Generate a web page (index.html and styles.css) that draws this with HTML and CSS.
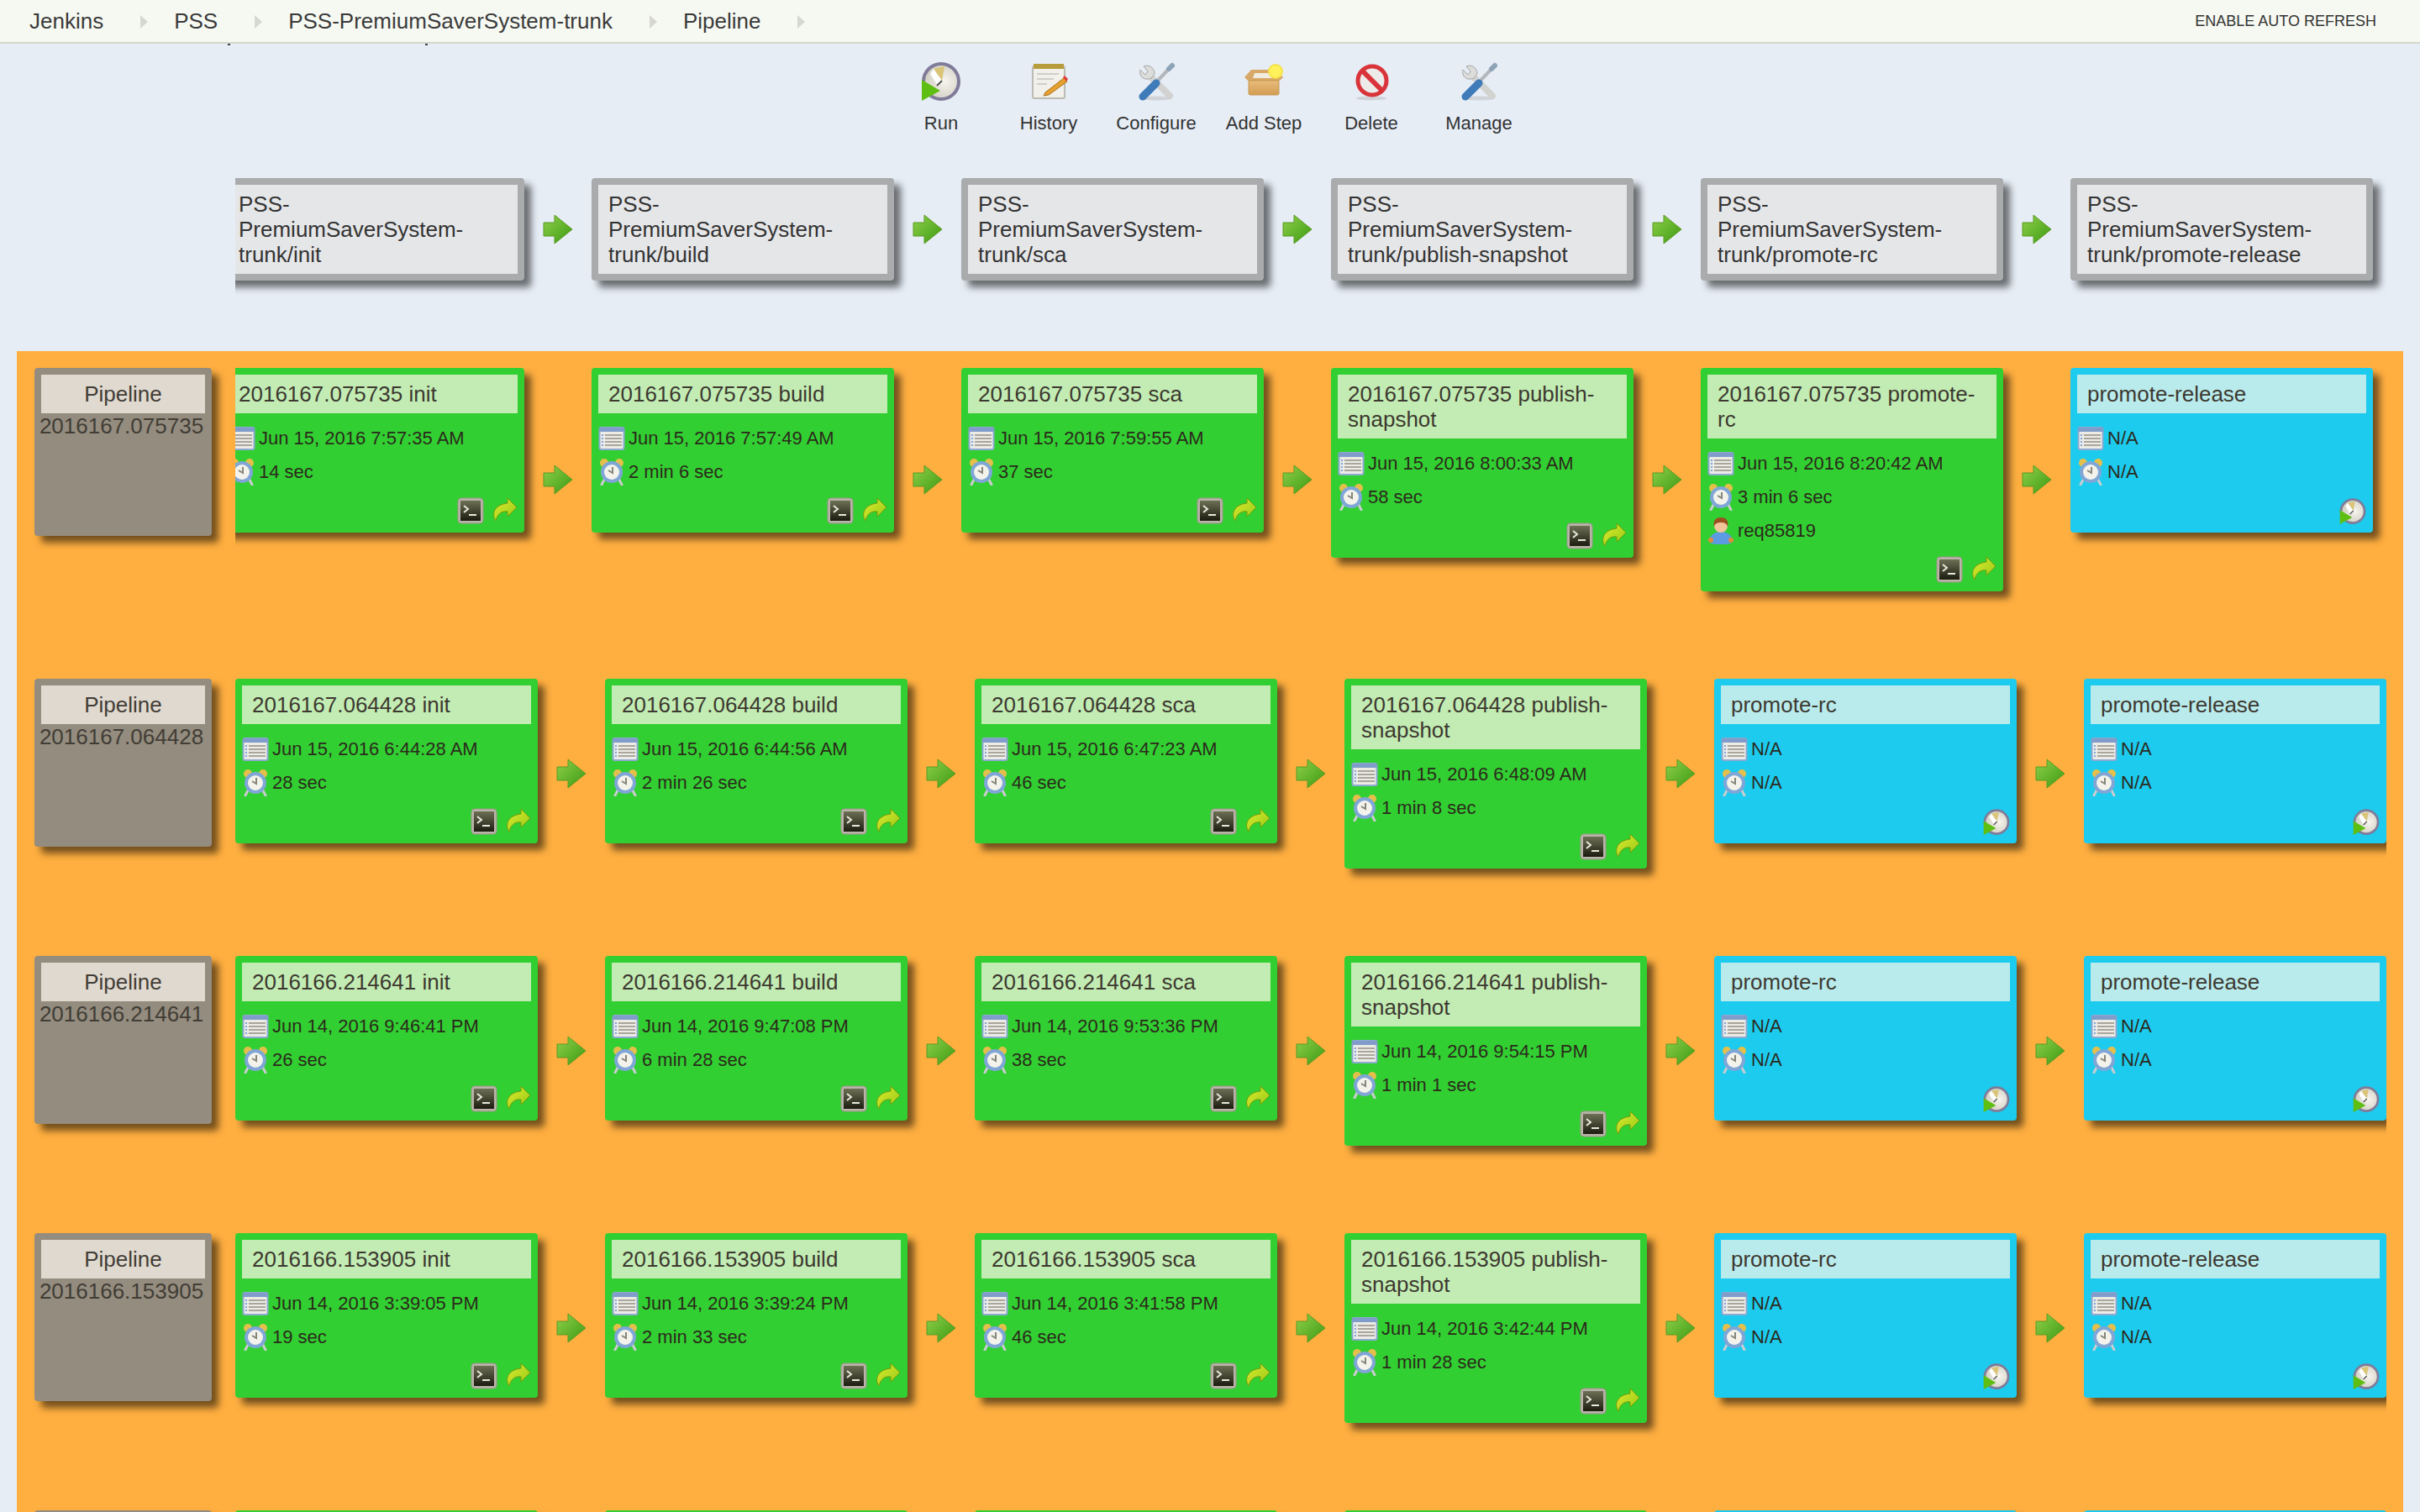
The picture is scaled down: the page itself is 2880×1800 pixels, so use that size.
FILE: index.html
```html
<!DOCTYPE html>
<html lang="en">
<head>
    <meta charset="UTF-8">
    <title>PSS-PremiumSaverSystem-trunk Pipeline</title>
    <link rel="stylesheet" href="styles.css">
</head>
<body>

<svg class="sprite" xmlns="http://www.w3.org/2000/svg">
    <defs>
        <linearGradient id="g-arrow" x1="0" y1="0" x2="1" y2="1"><stop offset="0" stop-color="#8fd04a"/><stop offset="1" stop-color="#3c9a12"/></linearGradient>
        <linearGradient id="g-next" x1="0" y1="0" x2="1" y2="1"><stop offset="0" stop-color="#dcec30"/><stop offset="1" stop-color="#98c814"/></linearGradient>
        <linearGradient id="g-term" x1="0" y1="0" x2="0" y2="1"><stop offset="0" stop-color="#6d7055"/><stop offset="1" stop-color="#1c1c10"/></linearGradient>
        <linearGradient id="g-box" x1="0" y1="0" x2="0" y2="1"><stop offset="0" stop-color="#e8bd7c"/><stop offset="1" stop-color="#d39c52"/></linearGradient>
        <radialGradient id="g-face" cx=".6" cy=".5" r=".6"><stop offset="0" stop-color="#f6f5ee"/><stop offset="1" stop-color="#cfccc0"/></radialGradient>

        <symbol id="i-arrow" viewBox="0 0 36 36">
            <path d="M1 10H14V1L35 18 14 35V26H1Z" fill="url(#g-arrow)" stroke="#5a9a22" stroke-width="1"/>
        </symbol>
        <symbol id="i-cal" viewBox="0 0 32 32">
            <rect x="1.5" y="3" width="29" height="26" rx="2" fill="#ecebe6" stroke="#8ea9d2" stroke-width="2"/>
            <rect x="1" y="3" width="30" height="5" fill="#7f9ccb"/>
            <path d="M8 12H28M8 16H28M8 20H28M8 24H28" stroke="#a9a69b" stroke-width="2"/>
            <path d="M4 12H6M4 16H6M4 20H6M4 24H6" stroke="#7fa6dd" stroke-width="2"/>
        </symbol>
        <symbol id="i-clock" viewBox="0 0 32 32">
            <circle cx="7" cy="5" r="5" fill="#e4c04a"/>
            <circle cx="25" cy="5" r="5" fill="#e4c04a"/>
            <path d="M7 25L4 31M25 25L28 31" stroke="#c9ccd0" stroke-width="3" stroke-linecap="round"/>
            <circle cx="16" cy="16" r="13" fill="#7fa6d6"/>
            <circle cx="16" cy="16" r="9" fill="#f3f3ec"/>
            <path d="M17 10V17L12 14" fill="none" stroke="#85857a" stroke-width="2"/>
        </symbol>
        <symbol id="i-user" viewBox="0 0 32 32">
            <path d="M3 30C1 24 6 17 16 17S31 24 29 30C24 33 8 33 3 30Z" fill="#5c9be2"/>
            <circle cx="4" cy="27" r="3" fill="#e08a3c"/>
            <circle cx="28" cy="27" r="3" fill="#e08a3c"/>
            <circle cx="16" cy="10" r="8" fill="#f2c49a"/>
            <path d="M8 11C6 3 11 0 16 0S26 3 24 11C23 7 20 6 16 6S9 7 8 11Z" fill="#9a4f1e"/>
        </symbol>
        <symbol id="i-term" viewBox="0 0 32 32">
            <rect x="1" y="1" width="30" height="30" rx="4" fill="#b8b5a8" stroke="#9a9789"/>
            <rect x="4" y="4" width="24" height="24" fill="url(#g-term)"/>
            <path d="M8 10L13 14 8 18" fill="none" stroke="#e8e8dc" stroke-width="2"/>
            <path d="M14 21H23" stroke="#e8e8dc" stroke-width="2"/>
        </symbol>
        <symbol id="i-next" viewBox="0 0 32 32">
            <path d="M20 1L31 12 20 23V17C13 16 8 20 6 28 1 21 3 9 20 7Z" fill="url(#g-next)" stroke="#6f9c0c"/>
        </symbol>
        <symbol id="i-run" viewBox="0 0 48 48">
            <circle cx="24" cy="25" r="21" fill="url(#g-face)" stroke="#7f7b99" stroke-width="4"/>
            <path d="M25 24L15 10 28 7Z" fill="#d9c477"/>
            <path d="M25 24L15 10 11 16 19 28Z" fill="#fff"/>
            <path d="M25 24L19 30" stroke="#555" stroke-width="2"/>
            <path d="M1 23L23 36 1 48Z" fill="#5fbe12"/>
        </symbol>
        <symbol id="i-history" viewBox="0 0 48 48">
            <rect x="5" y="7" width="38" height="38" rx="2" fill="#f1f0ea" stroke="#bcbbb4" stroke-width="2"/>
            <rect x="6" y="4" width="36" height="6" fill="#b79c3c"/>
            <path d="M10 16H36M10 22H30M10 28H22" stroke="#cfcec7" stroke-width="2"/>
            <path d="M20 38L42 21 46 25 24 41 18 42Z" fill="#e6a02f" stroke="#a8701c"/>
            <path d="M41 20L43 18 47 22 45 25Z" fill="#e23a3a"/>
        </symbol>
        <symbol id="i-tools" viewBox="0 0 48 48">
            <ellipse cx="24" cy="45" rx="19" ry="2.5" fill="#d0d4d9"/>
            <path d="M18 20L40 42" stroke="#d2d3d1" stroke-width="8" stroke-linecap="round"/>
            <path d="M9 7L14 13 11 17 5 11C3 18 9 25 18 21L22 16C22 10 17 4 9 7Z" fill="#dcdddb" stroke="#a4a6a8"/>
            <path d="M22 28L40 9" stroke="#b4b8bc" stroke-width="4"/>
            <path d="M39 10L43 6" stroke="#8da3b6" stroke-width="6" stroke-linecap="round"/>
            <path d="M8 43L24 27" stroke="#3f7ab9" stroke-width="9" stroke-linecap="round"/>
        </symbol>
        <symbol id="i-add" viewBox="0 0 48 48">
            <path d="M1 20L9 11H38L47 20 41 26H7Z" fill="#d8a866"/>
            <path d="M13 15H33L36 21H11Z" fill="#f1ece0"/>
            <rect x="6" y="24" width="36" height="17" rx="2" fill="url(#g-box)" stroke="#c79650"/>
            <circle cx="38" cy="13" r="8" fill="#fff25a" stroke="#f7e04a" stroke-width="2"/>
        </symbol>
        <symbol id="i-delete" viewBox="0 0 48 48">
            <ellipse cx="24" cy="45" rx="18" ry="2.5" fill="#d0d4d9"/>
            <circle cx="25" cy="24" r="17" fill="#ecebe9" stroke="#d9343a" stroke-width="5"/>
            <path d="M13 12L37 36" stroke="#d9343a" stroke-width="6"/>
        </symbol>
    </defs>
</svg>

<nav class="breadcrumbs">
    <a class="crumb">Jenkins</a><span class="crumb-sep"></span>
    <a class="crumb">PSS</a><span class="crumb-sep"></span>
    <a class="crumb">PSS-PremiumSaverSystem-trunk</a><span class="crumb-sep"></span>
    <a class="crumb">Pipeline</a><span class="crumb-sep"></span>
    <a class="auto-refresh">ENABLE AUTO REFRESH</a>
</nav>
<div class="scrolled-off"><i></i><i></i></div>

<div class="toolbar">
    <a class="tool"><svg class="tool-icon"><use href="#i-run"/></svg>Run</a>
    <a class="tool"><svg class="tool-icon"><use href="#i-history"/></svg>History</a>
    <a class="tool"><svg class="tool-icon"><use href="#i-tools"/></svg>Configure</a>
    <a class="tool"><svg class="tool-icon"><use href="#i-add"/></svg>Add Step</a>
    <a class="tool"><svg class="tool-icon"><use href="#i-delete"/></svg>Delete</a>
    <a class="tool"><svg class="tool-icon"><use href="#i-tools"/></svg>Manage</a>
</div>

<section class="steps-head">
    <div class="clip">
        <div class="track scrolled">
            <div class="step-name">PSS-PremiumSaverSystem-trunk/init</div>
            <svg class="arrow"><use href="#i-arrow"/></svg>
            <div class="step-name">PSS-PremiumSaverSystem-trunk/build</div>
            <svg class="arrow"><use href="#i-arrow"/></svg>
            <div class="step-name">PSS-PremiumSaverSystem-trunk/sca</div>
            <svg class="arrow"><use href="#i-arrow"/></svg>
            <div class="step-name">PSS-PremiumSaverSystem-trunk/publish-snapshot</div>
            <svg class="arrow"><use href="#i-arrow"/></svg>
            <div class="step-name">PSS-PremiumSaverSystem-trunk/promote-rc</div>
            <svg class="arrow"><use href="#i-arrow"/></svg>
            <div class="step-name">PSS-PremiumSaverSystem-trunk/promote-release</div>
        </div>
    </div>
</section>

<main class="pipelines">

    <div class="row">
        <div class="pipeline"><div class="pipeline-title">Pipeline</div><div class="pipeline-version">2016167.075735</div></div>
        <div class="clip">
            <div class="track scrolled">
                <div class="card ok">
                    <div class="card-title">2016167.075735 init</div>
                    <div class="info">
                        <div class="info-row"><svg class="icon"><use href="#i-cal"/></svg>Jun 15, 2016 7:57:35 AM</div>
                        <div class="info-row"><svg class="icon"><use href="#i-clock"/></svg>14 sec</div>
                    </div>
                    <div class="actions"><svg class="icon"><use href="#i-term"/></svg><svg class="icon"><use href="#i-next"/></svg></div>
                </div>
                <svg class="arrow"><use href="#i-arrow"/></svg>
                <div class="card ok">
                    <div class="card-title">2016167.075735 build</div>
                    <div class="info">
                        <div class="info-row"><svg class="icon"><use href="#i-cal"/></svg>Jun 15, 2016 7:57:49 AM</div>
                        <div class="info-row"><svg class="icon"><use href="#i-clock"/></svg>2 min 6 sec</div>
                    </div>
                    <div class="actions"><svg class="icon"><use href="#i-term"/></svg><svg class="icon"><use href="#i-next"/></svg></div>
                </div>
                <svg class="arrow"><use href="#i-arrow"/></svg>
                <div class="card ok">
                    <div class="card-title">2016167.075735 sca</div>
                    <div class="info">
                        <div class="info-row"><svg class="icon"><use href="#i-cal"/></svg>Jun 15, 2016 7:59:55 AM</div>
                        <div class="info-row"><svg class="icon"><use href="#i-clock"/></svg>37 sec</div>
                    </div>
                    <div class="actions"><svg class="icon"><use href="#i-term"/></svg><svg class="icon"><use href="#i-next"/></svg></div>
                </div>
                <svg class="arrow"><use href="#i-arrow"/></svg>
                <div class="card ok">
                    <div class="card-title">2016167.075735 publish-snapshot</div>
                    <div class="info">
                        <div class="info-row"><svg class="icon"><use href="#i-cal"/></svg>Jun 15, 2016 8:00:33 AM</div>
                        <div class="info-row"><svg class="icon"><use href="#i-clock"/></svg>58 sec</div>
                    </div>
                    <div class="actions"><svg class="icon"><use href="#i-term"/></svg><svg class="icon"><use href="#i-next"/></svg></div>
                </div>
                <svg class="arrow"><use href="#i-arrow"/></svg>
                <div class="card ok">
                    <div class="card-title">2016167.075735 promote-rc</div>
                    <div class="info">
                        <div class="info-row"><svg class="icon"><use href="#i-cal"/></svg>Jun 15, 2016 8:20:42 AM</div>
                        <div class="info-row"><svg class="icon"><use href="#i-clock"/></svg>3 min 6 sec</div>
                        <div class="info-row"><svg class="icon"><use href="#i-user"/></svg>req85819</div>
                    </div>
                    <div class="actions"><svg class="icon"><use href="#i-term"/></svg><svg class="icon"><use href="#i-next"/></svg></div>
                </div>
                <svg class="arrow"><use href="#i-arrow"/></svg>
                <div class="card waiting">
                    <div class="card-title">promote-release</div>
                    <div class="info">
                        <div class="info-row"><svg class="icon"><use href="#i-cal"/></svg>N/A</div>
                        <div class="info-row"><svg class="icon"><use href="#i-clock"/></svg>N/A</div>
                    </div>
                    <div class="actions"><svg class="icon"><use href="#i-run"/></svg></div>
                </div>
            </div>
        </div>
    </div>

    <div class="row">
        <div class="pipeline"><div class="pipeline-title">Pipeline</div><div class="pipeline-version">2016167.064428</div></div>
        <div class="clip">
            <div class="track">
                <div class="card ok">
                    <div class="card-title">2016167.064428 init</div>
                    <div class="info">
                        <div class="info-row"><svg class="icon"><use href="#i-cal"/></svg>Jun 15, 2016 6:44:28 AM</div>
                        <div class="info-row"><svg class="icon"><use href="#i-clock"/></svg>28 sec</div>
                    </div>
                    <div class="actions"><svg class="icon"><use href="#i-term"/></svg><svg class="icon"><use href="#i-next"/></svg></div>
                </div>
                <svg class="arrow"><use href="#i-arrow"/></svg>
                <div class="card ok">
                    <div class="card-title">2016167.064428 build</div>
                    <div class="info">
                        <div class="info-row"><svg class="icon"><use href="#i-cal"/></svg>Jun 15, 2016 6:44:56 AM</div>
                        <div class="info-row"><svg class="icon"><use href="#i-clock"/></svg>2 min 26 sec</div>
                    </div>
                    <div class="actions"><svg class="icon"><use href="#i-term"/></svg><svg class="icon"><use href="#i-next"/></svg></div>
                </div>
                <svg class="arrow"><use href="#i-arrow"/></svg>
                <div class="card ok">
                    <div class="card-title">2016167.064428 sca</div>
                    <div class="info">
                        <div class="info-row"><svg class="icon"><use href="#i-cal"/></svg>Jun 15, 2016 6:47:23 AM</div>
                        <div class="info-row"><svg class="icon"><use href="#i-clock"/></svg>46 sec</div>
                    </div>
                    <div class="actions"><svg class="icon"><use href="#i-term"/></svg><svg class="icon"><use href="#i-next"/></svg></div>
                </div>
                <svg class="arrow"><use href="#i-arrow"/></svg>
                <div class="card ok">
                    <div class="card-title">2016167.064428 publish-snapshot</div>
                    <div class="info">
                        <div class="info-row"><svg class="icon"><use href="#i-cal"/></svg>Jun 15, 2016 6:48:09 AM</div>
                        <div class="info-row"><svg class="icon"><use href="#i-clock"/></svg>1 min 8 sec</div>
                    </div>
                    <div class="actions"><svg class="icon"><use href="#i-term"/></svg><svg class="icon"><use href="#i-next"/></svg></div>
                </div>
                <svg class="arrow"><use href="#i-arrow"/></svg>
                <div class="card waiting">
                    <div class="card-title">promote-rc</div>
                    <div class="info">
                        <div class="info-row"><svg class="icon"><use href="#i-cal"/></svg>N/A</div>
                        <div class="info-row"><svg class="icon"><use href="#i-clock"/></svg>N/A</div>
                    </div>
                    <div class="actions"><svg class="icon"><use href="#i-run"/></svg></div>
                </div>
                <svg class="arrow"><use href="#i-arrow"/></svg>
                <div class="card waiting">
                    <div class="card-title">promote-release</div>
                    <div class="info">
                        <div class="info-row"><svg class="icon"><use href="#i-cal"/></svg>N/A</div>
                        <div class="info-row"><svg class="icon"><use href="#i-clock"/></svg>N/A</div>
                    </div>
                    <div class="actions"><svg class="icon"><use href="#i-run"/></svg></div>
                </div>
            </div>
        </div>
    </div>

    <div class="row">
        <div class="pipeline"><div class="pipeline-title">Pipeline</div><div class="pipeline-version">2016166.214641</div></div>
        <div class="clip">
            <div class="track">
                <div class="card ok">
                    <div class="card-title">2016166.214641 init</div>
                    <div class="info">
                        <div class="info-row"><svg class="icon"><use href="#i-cal"/></svg>Jun 14, 2016 9:46:41 PM</div>
                        <div class="info-row"><svg class="icon"><use href="#i-clock"/></svg>26 sec</div>
                    </div>
                    <div class="actions"><svg class="icon"><use href="#i-term"/></svg><svg class="icon"><use href="#i-next"/></svg></div>
                </div>
                <svg class="arrow"><use href="#i-arrow"/></svg>
                <div class="card ok">
                    <div class="card-title">2016166.214641 build</div>
                    <div class="info">
                        <div class="info-row"><svg class="icon"><use href="#i-cal"/></svg>Jun 14, 2016 9:47:08 PM</div>
                        <div class="info-row"><svg class="icon"><use href="#i-clock"/></svg>6 min 28 sec</div>
                    </div>
                    <div class="actions"><svg class="icon"><use href="#i-term"/></svg><svg class="icon"><use href="#i-next"/></svg></div>
                </div>
                <svg class="arrow"><use href="#i-arrow"/></svg>
                <div class="card ok">
                    <div class="card-title">2016166.214641 sca</div>
                    <div class="info">
                        <div class="info-row"><svg class="icon"><use href="#i-cal"/></svg>Jun 14, 2016 9:53:36 PM</div>
                        <div class="info-row"><svg class="icon"><use href="#i-clock"/></svg>38 sec</div>
                    </div>
                    <div class="actions"><svg class="icon"><use href="#i-term"/></svg><svg class="icon"><use href="#i-next"/></svg></div>
                </div>
                <svg class="arrow"><use href="#i-arrow"/></svg>
                <div class="card ok">
                    <div class="card-title">2016166.214641 publish-snapshot</div>
                    <div class="info">
                        <div class="info-row"><svg class="icon"><use href="#i-cal"/></svg>Jun 14, 2016 9:54:15 PM</div>
                        <div class="info-row"><svg class="icon"><use href="#i-clock"/></svg>1 min 1 sec</div>
                    </div>
                    <div class="actions"><svg class="icon"><use href="#i-term"/></svg><svg class="icon"><use href="#i-next"/></svg></div>
                </div>
                <svg class="arrow"><use href="#i-arrow"/></svg>
                <div class="card waiting">
                    <div class="card-title">promote-rc</div>
                    <div class="info">
                        <div class="info-row"><svg class="icon"><use href="#i-cal"/></svg>N/A</div>
                        <div class="info-row"><svg class="icon"><use href="#i-clock"/></svg>N/A</div>
                    </div>
                    <div class="actions"><svg class="icon"><use href="#i-run"/></svg></div>
                </div>
                <svg class="arrow"><use href="#i-arrow"/></svg>
                <div class="card waiting">
                    <div class="card-title">promote-release</div>
                    <div class="info">
                        <div class="info-row"><svg class="icon"><use href="#i-cal"/></svg>N/A</div>
                        <div class="info-row"><svg class="icon"><use href="#i-clock"/></svg>N/A</div>
                    </div>
                    <div class="actions"><svg class="icon"><use href="#i-run"/></svg></div>
                </div>
            </div>
        </div>
    </div>

    <div class="row">
        <div class="pipeline"><div class="pipeline-title">Pipeline</div><div class="pipeline-version">2016166.153905</div></div>
        <div class="clip">
            <div class="track">
                <div class="card ok">
                    <div class="card-title">2016166.153905 init</div>
                    <div class="info">
                        <div class="info-row"><svg class="icon"><use href="#i-cal"/></svg>Jun 14, 2016 3:39:05 PM</div>
                        <div class="info-row"><svg class="icon"><use href="#i-clock"/></svg>19 sec</div>
                    </div>
                    <div class="actions"><svg class="icon"><use href="#i-term"/></svg><svg class="icon"><use href="#i-next"/></svg></div>
                </div>
                <svg class="arrow"><use href="#i-arrow"/></svg>
                <div class="card ok">
                    <div class="card-title">2016166.153905 build</div>
                    <div class="info">
                        <div class="info-row"><svg class="icon"><use href="#i-cal"/></svg>Jun 14, 2016 3:39:24 PM</div>
                        <div class="info-row"><svg class="icon"><use href="#i-clock"/></svg>2 min 33 sec</div>
                    </div>
                    <div class="actions"><svg class="icon"><use href="#i-term"/></svg><svg class="icon"><use href="#i-next"/></svg></div>
                </div>
                <svg class="arrow"><use href="#i-arrow"/></svg>
                <div class="card ok">
                    <div class="card-title">2016166.153905 sca</div>
                    <div class="info">
                        <div class="info-row"><svg class="icon"><use href="#i-cal"/></svg>Jun 14, 2016 3:41:58 PM</div>
                        <div class="info-row"><svg class="icon"><use href="#i-clock"/></svg>46 sec</div>
                    </div>
                    <div class="actions"><svg class="icon"><use href="#i-term"/></svg><svg class="icon"><use href="#i-next"/></svg></div>
                </div>
                <svg class="arrow"><use href="#i-arrow"/></svg>
                <div class="card ok">
                    <div class="card-title">2016166.153905 publish-snapshot</div>
                    <div class="info">
                        <div class="info-row"><svg class="icon"><use href="#i-cal"/></svg>Jun 14, 2016 3:42:44 PM</div>
                        <div class="info-row"><svg class="icon"><use href="#i-clock"/></svg>1 min 28 sec</div>
                    </div>
                    <div class="actions"><svg class="icon"><use href="#i-term"/></svg><svg class="icon"><use href="#i-next"/></svg></div>
                </div>
                <svg class="arrow"><use href="#i-arrow"/></svg>
                <div class="card waiting">
                    <div class="card-title">promote-rc</div>
                    <div class="info">
                        <div class="info-row"><svg class="icon"><use href="#i-cal"/></svg>N/A</div>
                        <div class="info-row"><svg class="icon"><use href="#i-clock"/></svg>N/A</div>
                    </div>
                    <div class="actions"><svg class="icon"><use href="#i-run"/></svg></div>
                </div>
                <svg class="arrow"><use href="#i-arrow"/></svg>
                <div class="card waiting">
                    <div class="card-title">promote-release</div>
                    <div class="info">
                        <div class="info-row"><svg class="icon"><use href="#i-cal"/></svg>N/A</div>
                        <div class="info-row"><svg class="icon"><use href="#i-clock"/></svg>N/A</div>
                    </div>
                    <div class="actions"><svg class="icon"><use href="#i-run"/></svg></div>
                </div>
            </div>
        </div>
    </div>

    <!-- next pipeline starts right at the fold -->
    <div class="row">
        <div class="pipeline"></div>
        <div class="clip">
            <div class="track">
                <div class="card ok"></div>
                <svg class="arrow"></svg>
                <div class="card ok"></div>
                <svg class="arrow"></svg>
                <div class="card ok"></div>
                <svg class="arrow"></svg>
                <div class="card ok"></div>
                <svg class="arrow"></svg>
                <div class="card waiting"></div>
                <svg class="arrow"></svg>
                <div class="card waiting"></div>
            </div>
        </div>
    </div>

</main>

</body>
</html>
```

FILE: styles.css
```css
html, body {
    height: 100%;
    overflow: hidden;
}

body {
    margin: 0;
    background: #e6edf5;
    color: #333;
    font-family: "Liberation Sans", Arial, sans-serif;
    font-size: 26px;
}

.sprite {
    display: block;
    width: 0;
    height: 0;
}

/* breadcrumb bar */
.breadcrumbs {
    display: flex;
    align-items: center;
    height: 50px;
    padding: 0 52px 0 35px;
    background: #f6f9f2;
    border-bottom: 2px solid #d3d8cc;
}

.crumb {
    color: #3a3a3a;
}

.crumb-sep {
    width: 0;
    height: 0;
    margin: 2px 31px 0 44px;
    border-left: 9px solid #d6d8d0;
    border-top: 8px solid transparent;
    border-bottom: 8px solid transparent;
}

.auto-refresh {
    margin-left: auto;
    font-size: 18px;
}

.scrolled-off {
    display: flex;
    gap: 232px;
    height: 2px;
    padding-left: 271px;
}

.scrolled-off i {
    width: 3px;
    height: 2px;
    background: #444;
}

/* tool buttons */
.toolbar {
    display: flex;
    justify-content: center;
    margin-top: 18px;
}

.tool {
    display: flex;
    flex-direction: column;
    align-items: center;
    width: 128px;
    font-size: 22px;
    line-height: 30px;
}

.tool-icon {
    width: 48px;
    height: 48px;
    margin-bottom: 12px;
}

/* shared clipping of the scrolling step columns */
.clip {
    width: 2560px;
    overflow: hidden;
    padding-bottom: 104px;
}

.track {
    display: flex;
    align-items: flex-start;
    width: max-content;
}

.track.scrolled {
    margin-left: -16px;
}

.arrow {
    flex-shrink: 0;
    align-self: center;
    width: 36px;
    height: 36px;
    margin: 0 22px;
}

/* step names */
.steps-head {
    display: flex;
    padding-left: 280px;
    margin-top: 50px;
}

.steps-head .clip {
    padding-bottom: 84px;
}

.step-name {
    flex-shrink: 0;
    box-sizing: border-box;
    width: 360px;
    padding: 8px 12px;
    background: #e5e6e8;
    border: 8px solid #a9abad;
    border-radius: 4px;
    box-shadow: 8px 8px 8px rgba(0, 0, 0, 0.55);
    line-height: 30px;
}

/* pipeline rows */
.pipelines {
    margin: 0 20px;
    padding-top: 20px;
    background: #ffaf40;
}

.row {
    display: flex;
    align-items: flex-start;
    gap: 28px;
    padding-left: 21px;
}

.pipeline {
    flex-shrink: 0;
    box-sizing: border-box;
    width: 211px;
    height: 200px;
    background: #948c7e;
    border: 8px solid #948c7e;
    border-radius: 4px;
    box-shadow: 8px 8px 8px rgba(0, 0, 0, 0.55);
    color: #413d36;
    text-align: center;
}

.pipeline-title {
    height: 46px;
    line-height: 46px;
    background: #e0d9cf;
}

.pipeline-version {
    margin: 0 -2px 0 -6px;
    line-height: 30px;
}

.card {
    flex-shrink: 0;
    box-sizing: border-box;
    width: 360px;
    min-height: 196px;
    border: 8px solid;
    border-radius: 4px;
    box-shadow: 8px 8px 8px rgba(0, 0, 0, 0.55);
}

.card.ok {
    background: #32cf32;
    border-color: #32cf32;
}

.card.waiting {
    background: #1ccbee;
    border-color: #1ccbee;
}

.card-title {
    padding: 8px 12px;
    line-height: 30px;
    color: #3d3830;
}

.ok .card-title {
    background: #c2ecb3;
}

.waiting .card-title {
    background: #b9ebec;
}

.info {
    margin-top: 10px;
    font-size: 22px;
    color: #2b2a1c;
}

.info-row {
    display: flex;
    align-items: center;
    gap: 4px;
    height: 40px;
}

.icon {
    flex-shrink: 0;
    width: 32px;
    height: 32px;
}

.actions {
    display: flex;
    justify-content: flex-end;
    gap: 8px;
    margin-top: 10px;
    padding-bottom: 2px;
}
```
